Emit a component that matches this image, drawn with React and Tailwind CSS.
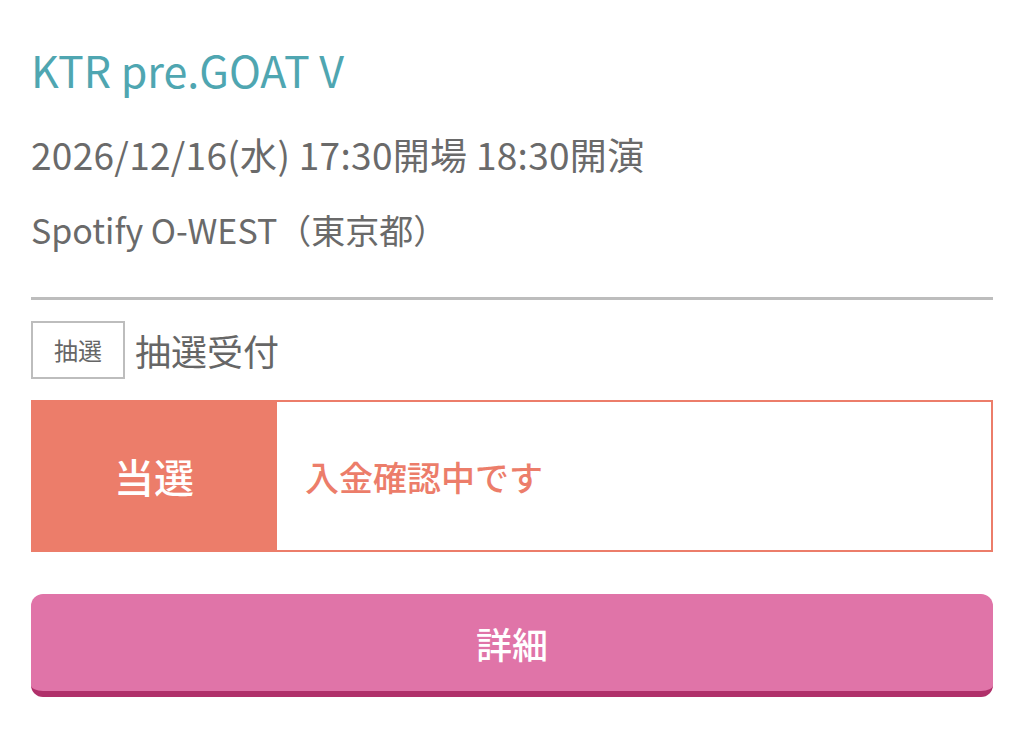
export default function App() {
  return (
    <div
      className="min-h-[736px] bg-white px-[31px] pt-[43px]"
      style={{ fontFamily: '"Noto Sans CJK JP", "Noto Sans", sans-serif' }}
    >
      <h1 className="text-[43px] leading-[52px] text-[#4fa6b1]">KTR pre.GOAT V</h1>
      <p className="mt-[35px] text-[37px] leading-[48px] tracking-[0.3px] text-[#6a6a6a]">
        2026/12/16(水) 17:30開場 18:30開演
      </p>
      <p className="mt-[29px] text-[34px] leading-[46px] text-[#6a6a6a]">
        Spotify O-WEST（東京都）
      </p>

      <div className="mt-[44px] h-[3px] bg-[#bdbdbd]" />

      <div className="mt-[21px] flex items-center gap-[10px]">
        <span className="flex h-[58px] w-[94px] items-center justify-center border-2 border-[#bdbdbd] text-[24px] text-[#666]">
          抽選
        </span>
        <span className="text-[36px] text-[#666]">抽選受付</span>
      </div>

      <div className="mt-[21px] flex h-[152px]">
        <div className="flex w-[246px] items-center justify-center bg-[#ec7d6a] text-[40px] font-medium text-white">
          当選
        </div>
        <div className="flex flex-1 items-center border-2 border-l-0 border-[#ec7d6a] pl-[28px] text-[34px] font-medium text-[#ec7d6a]">
          入金確認中です
        </div>
      </div>

      <button className="mt-[42px] flex h-[103px] w-full items-center justify-center rounded-[12px] border-b-[6px] border-[#b0306a] bg-[#e074a8] text-[36px] font-medium text-white">
        詳細
      </button>
    </div>
  );
}
